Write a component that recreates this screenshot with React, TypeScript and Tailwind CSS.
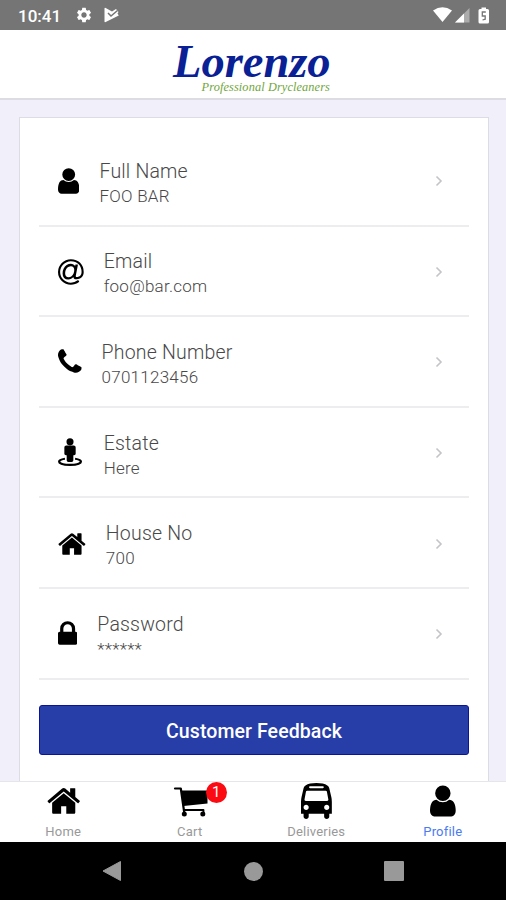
import type { ReactNode } from 'react'
import { MdSettings } from 'react-icons/md'

type Glyph = { d: string; x: number; w: number }

const glyphs: Record<string, Glyph> = {
  user: {
    x: 256,
    w: 1280,
    d: 'M1536 1399q0 109-62.5 187t-150.5 78h-854q-88 0-150.5-78t-62.5-187q0-85 8.5-160.5t31.5-152 58.5-131 94-89 134.5-34.5q131 128 313 128t313-128q76 0 134.5 34.5t94 89 58.5 131 31.5 152 8.5 160.5zm-256-887q0 159-112.5 271.5t-271.5 112.5-271.5-112.5-112.5-271.5 112.5-271.5 271.5-112.5 271.5 112.5 112.5 271.5z',
  },
  at: {
    x: 128,
    w: 1536,
    d: 'M1100 775q0-108-53.5-169t-147.5-61q-63 0-124 30.5t-110 84.5-79.5 137-30.5 180q0 112 53.5 173t150.5 61q96 0 176-66.5t122.5-166 42.5-203.5zm564 121q0 111-37 197t-98.5 135-131.5 74.5-145 27.5q-6 .5-15.5.5h-16.5q-95 0-142-53-28-33-33-83-52 66-131.5 110t-173.5 44q-161 0-249.5-95.5t-88.5-269.5q0-157 66-290t179-210.5 246-77.5q87 0 155 35.5t106 99.5l2-19 11-56q1-6 5.5-12t9.5-6h118q5 0 13 11 5 5 3 16l-120 614q-5 24-5 48 0 39 12.5 52t44.5 13q28-1 57-5.5t73-24 77-50 57-89.5 24-137q0-292-174-466t-466-174q-130 0-248.5 51t-204 136.5-136.5 204-51 248.5 51 248.5 136.5 204 204 136.5 248.5 51q228 0 405-144 11-9 24-8t21 12l41 49q8 12 7 24-2 13-12 22-102 83-227.5 128t-258.5 45q-156 0-298-61t-245-164-164-245-61-298 61-298 164-245 245-164 298-61q344 0 556 212t212 556z',
  },
  phone: {
    x: 192,
    w: 1408,
    d: 'M1600 1240q0 27-10 70.5t-21 68.5q-21 50-122 106-94 51-186 51-27 0-53-3.5t-57.5-12.5-47-14.5-55.5-20.5-49-18q-98-35-175-83-127-79-264-216t-216-264q-48-77-83-175-3-9-18-49t-20.5-55.5-14.5-47-12.5-57.5-3.5-53q0-92 51-186 56-101 106-122 25-11 68.5-21t70.5-10q14 0 21 3 18 6 53 76 11 19 30 54t35 63.5 31 53.5q3 4 17.5 25t21.5 35.5 7 28.5q0 20-28.5 50t-62 55-62 53-28.5 46q0 9 5 22.5t8.5 20.5 14 24 11.5 19q76 137 174 235t235 174q2 1 19 11.5t24 14 20.5 8.5 22.5 5q18 0 46-28.5t53-62 55-62 50-28.5q14 0 28.5 7t35.5 21.5 25 17.5q25 15 53.5 31t63.5 35 54 30q70 35 76 53 3 7 3 21z',
  },
  street: {
    x: 192,
    w: 1536,
    d: 'M1122 222a212 212 0 1 1-424 0a212 212 0 1 1 424 0zM690 450h440q50 0 84 34t34 84v370q0 40-28 68t-68 28h-44v300q0 40-28 68t-68 28h-204q-40 0-68-28t-28-68v-300h-44q-40 0-68-28t-28-68v-370q0-50 34-84t84-34zM600 1180l14 124q-250 38-288 112q70 116 584 124q514-8 584-124q-38-74-288-112l14-124q408 64 408 236q0 240-718 254q-718-14-718-254q0-172 408-236z',
  },
  home: {
    x: 64,
    w: 1664,
    d: 'M1472 992v480q0 26-19 45t-45 19h-384v-384h-256v384h-384q-26 0-45-19t-19-45v-480q0-1 .5-3t.5-3l575-474 575 474q1 2 1 6zm223-69l-62 74q-8 9-21 11h-3q-13 0-21-7l-692-577-692 577q-12 8-24 7-13-2-21-11l-62-74q-8-10-7-23.5t11-21.5l719-599q32-26 76-26t76 26l244 204v-195q0-14 9-23t23-9h192q14 0 23 9t9 23v408l219 182q10 8 11 21.5t-7 23.5z',
  },
  lock: {
    x: 320,
    w: 1152,
    d: 'M640 768h512v-192q0-106-75-181t-181-75-181 75-75 181v192zm832 96v576q0 40-28 68t-68 28h-960q-40 0-68-28t-28-68v-576q0-40 28-68t68-28h32v-192q0-184 132-316t316-132 316 132 132 316v192h32q40 0 68 28t28 68z',
  },
  bus: {
    x: 128,
    w: 1536,
    d: 'M512 1216q0-53-37.5-90.5t-90.5-37.5-90.5 37.5-37.5 90.5 37.5 90.5 90.5 37.5 90.5-37.5 37.5-90.5zm1024 0q0-53-37.5-90.5t-90.5-37.5-90.5 37.5-37.5 90.5 37.5 90.5 90.5 37.5 90.5-37.5 37.5-90.5zm-46-396l-72-384q-5-23-22.5-37.5t-40.5-14.5h-918q-23 0-40.5 14.5t-22.5 37.5l-72 384q-5 30 14 53t49 23h1062q30 0 49-23t14-53zm-226-612q0-20-14-34t-34-14h-640q-20 0-34 14t-14 34 14 34 34 14h640q20 0 34-14t14-34zm400 725v603h-128v128q0 53-37.5 90.5t-90.5 37.5-90.5-37.5-37.5-90.5v-128h-768v128q0 53-37.5 90.5t-90.5 37.5-90.5-37.5-37.5-90.5v-128h-128v-603q0-112 25-223l103-454q9-78 97.5-137t230-89 312.5-30 312.5 30 230 89 97.5 137l105 454q23 102 23 223z',
  },
}

function Icon({ name, size }: { name: string; size: number }) {
  const g = glyphs[name]
  return (
    <svg
      className="shrink-0"
      width={(g.w / 1792) * size}
      height={size}
      viewBox={`${g.x} 0 ${g.w} 1792`}
      fill="currentColor"
    >
      <path d={g.d} />
    </svg>
  )
}

function CartIcon() {
  return (
    <svg width="36" height="36" viewBox="0 0 36 36" fill="none" stroke="black">
      <path d="M3 5.500H8.800L12.300 30" strokeWidth="2.200" strokeLinecap="round" strokeLinejoin="round" />
      <path d="M9.500 7.500H35.500V20.500L11.500 23z" fill="black" stroke="none" />
      <path d="M11.500 27H31.500V30" strokeWidth="1.800" strokeLinejoin="round" />
      <circle cx="12.300" cy="31" r="2.500" fill="black" stroke="none" />
      <circle cx="30.800" cy="31" r="2.500" fill="black" stroke="none" />
    </svg>
  )
}

const fields = [
  { icon: 'user', label: 'Full Name', value: 'FOO BAR' },
  { icon: 'at', label: 'Email', value: 'foo@bar.com' },
  { icon: 'phone', label: 'Phone Number', value: '0701123456' },
  { icon: 'street', label: 'Estate', value: 'Here' },
  { icon: 'home', label: 'House No', value: '700' },
  { icon: 'lock', label: 'Password', value: '******' },
]

function StatusBar() {
  return (
    <div className="flex h-[30px] shrink-0 items-center bg-[#757575] pl-[18px] pr-[16px] text-white">
      <span className="w-[57px] pt-[3px] text-[17px] font-medium leading-none">10:41</span>
      <MdSettings size={18} />
      <svg className="ml-[11px]" width="16" height="16" viewBox="0 0 16 16">
        <path d="M.5 1.500Q.5.300 1.700.9L8 4.500L12 2L14.500 5L13.500 6.500L14.800 8.400L1.700 15Q.5 15.500.5 14.500z" fill="white" />
        <path d="M4 6L7 9L13.500 3.500" fill="none" stroke="#757575" strokeWidth="1.500" />
      </svg>
      <svg className="ml-auto" width="57" height="18" viewBox="0 0 57 18">
        <path d="M0 4.500Q9.500-2 19 4.500L9.500 16z" fill="white" />
        <path d="M36.500 2V16.500H22z" fill="white" fillOpacity=".4" />
        <path d="M31 7.500V16.500H22z" fill="white" />
        <path d="M48.500 1.500H53V3H54.500Q56 3 56 4.500V16Q56 17.500 54.500 17.500H47Q45.500 17.500 45.500 16V4.500Q45.500 3 47 3H48.500z" fill="white" />
        <path d="M52.800 6H49.300V10H52.200V13.200L49.500 14" fill="none" stroke="#757575" strokeWidth="1.300" />
      </svg>
    </div>
  )
}

function Header() {
  return (
    <div className="h-[70px] shrink-0 border-b-2 border-[#dcdce2] bg-white pl-[173px] font-['Liberation_Serif'] italic">
      <div className="w-[158px] pt-[12px]">
        <div className="text-[46.500px] font-bold leading-[40px] text-[#0a2196]">Lorenzo</div>
        <div className="whitespace-nowrap pr-px text-right text-[12.300px] leading-[11px] tracking-[0.12px] text-[#6fa63c]">
          Professional Drycleaners
        </div>
      </div>
    </div>
  )
}

function Tab({ label, active, children }: { label: string; active?: boolean; children: ReactNode }) {
  return (
    <div className="flex flex-1 flex-col items-center">
      <div className="relative mt-px flex h-9 items-center">{children}</div>
      <span className={`mt-[5px] text-[13px] leading-[15px] tracking-[0.2px] ${active ? 'text-[#4a7bf0]' : 'text-[#999]'}`}>
        {label}
      </span>
    </div>
  )
}

export default function App() {
  return (
    <div className="flex h-[900px] w-[506px] flex-col overflow-hidden bg-[#f1f0fa] font-['Roboto',sans-serif]">
      <StatusBar />
      <Header />

      {/* Profile card */}
      <div className="min-h-0 flex-1 overflow-hidden pl-[19px] pr-[17px] pt-[17px]">
        <div className="h-[700px] border border-[#dcdce6] bg-white px-[19px] pt-[18px]">
          {fields.map((f) => (
            <div key={f.label} className="flex h-[90.600px] items-center border-b-2 border-[#ededef] pl-[19px] pr-[24px] pt-[2px]">
              <Icon name={f.icon} size={30} />
              <div className="ml-[20px] pt-[4px] font-light text-[#484848]">
                <div className="text-[19.500px] leading-[26px] tracking-[0.2px]">{f.label}</div>
                <div className="-mt-px text-[17px] leading-[24px] tracking-[0.25px]">{f.value}</div>
              </div>
              <svg className="ml-auto" width="12" height="14" viewBox="0 0 12 14">
                <path d="M3.500 2.500L8 7L3.500 11.500" fill="none" stroke="#c4c4c8" strokeWidth="1.600" />
              </svg>
            </div>
          ))}
          <button className="mt-[25px] h-[50px] w-full rounded-[3px] border border-[#0a1499] bg-[#273da8] pt-[4px] text-[19.500px] font-medium tracking-[0.1px] text-white">
            Customer Feedback
          </button>
        </div>
      </div>

      {/* Tab bar */}
      <div className="flex h-[61px] shrink-0 border-t border-[#e6e6ea] bg-white">
        <Tab label="Home">
          <Icon name="home" size={36} />
        </Tab>
        <Tab label="Cart">
          <CartIcon />
          <span className="absolute -right-[19px] -top-[1px] flex h-[21px] w-[21px] items-center justify-center rounded-full bg-[#fb0a12] text-[15px] leading-none text-white">
            1
          </span>
        </Tab>
        <Tab label="Deliveries">
          <Icon name="bus" size={36} />
        </Tab>
        <Tab label="Profile" active>
          <Icon name="user" size={36} />
        </Tab>
      </div>

      {/* Android navigation */}
      <div className="flex h-[58px] shrink-0 items-center justify-between bg-black px-[102px]">
        <svg width="20" height="22" viewBox="0 0 20 22">
          <path d="M1 11L18.500 1.500V20.500z" fill="#999" stroke="#999" strokeLinejoin="round" />
        </svg>
        <span className="h-[19px] w-[19px] rounded-full bg-[#999]" />
        <span className="h-[20px] w-[20px] rounded-[1px] bg-[#999]" />
      </div>
    </div>
  )
}
